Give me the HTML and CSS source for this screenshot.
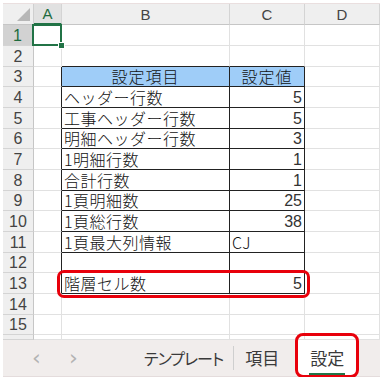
FILE: index.html
```html
<!DOCTYPE html>
<html lang="ja">
<head>
	<meta charset="UTF-8">
	<title>設定</title>
	<link rel="stylesheet" href="styles.css">
</head>
<body>
	<div class="app">
		<table class="sheet">
			<colgroup>
				<col class="c-row">
				<col class="c-a">
				<col class="c-b">
				<col class="c-c">
				<col class="c-d">
			</colgroup>
			<tr class="r-head">
				<td class="corner"><span class="corner-tri"></span></td>
				<td class="colh sel">A</td>
				<td class="colh">B</td>
				<td class="colh">C</td>
				<td class="colh">D</td>
			</tr>
			<tr class="r21">
				<td class="rowh sel">1</td>
				<td class="cur"><span class="cursor"><i></i></span></td>
				<td></td><td></td><td></td>
			</tr>
			<tr class="r21">
				<td class="rowh">2</td><td></td>
				<td class="tt"></td><td class="tt"></td><td></td>
			</tr>
			<tr class="r20">
				<td class="rowh">3</td><td class="tl"></td>
				<td class="t hd">設定項目</td><td class="t hd">設定値</td><td></td>
			</tr>
			<tr class="r21">
				<td class="rowh">4</td><td class="tl"></td>
				<td class="t">ヘッダー行数</td><td class="t num">5</td><td></td>
			</tr>
			<tr class="r21">
				<td class="rowh">5</td><td class="tl"></td>
				<td class="t">工事ヘッダー行数</td><td class="t num">5</td><td></td>
			</tr>
			<tr class="r20">
				<td class="rowh">6</td><td class="tl"></td>
				<td class="t">明細ヘッダー行数</td><td class="t num">3</td><td></td>
			</tr>
			<tr class="r21">
				<td class="rowh">7</td><td class="tl"></td>
				<td class="t">1明細行数</td><td class="t num">1</td><td></td>
			</tr>
			<tr class="r21">
				<td class="rowh">8</td><td class="tl"></td>
				<td class="t">合計行数</td><td class="t num">1</td><td></td>
			</tr>
			<tr class="r20">
				<td class="rowh">9</td><td class="tl"></td>
				<td class="t">1頁明細数</td><td class="t num">25</td><td></td>
			</tr>
			<tr class="r21">
				<td class="rowh">10</td><td class="tl"></td>
				<td class="t">1頁総行数</td><td class="t num">38</td><td></td>
			</tr>
			<tr class="r21">
				<td class="rowh">11</td><td class="tl"></td>
				<td class="t">1頁最大列情報</td><td class="t">CJ</td><td></td>
			</tr>
			<tr class="r20">
				<td class="rowh">12</td><td class="tl"></td>
				<td class="t"></td><td class="t"></td><td></td>
			</tr>
			<tr class="r21">
				<td class="rowh">13</td><td class="tl"></td>
				<td class="t mark">階層セル数<span class="ring"></span></td><td class="t num">5</td><td></td>
			</tr>
			<tr class="r21">
				<td class="rowh">14</td><td></td><td></td><td></td><td></td>
			</tr>
			<tr class="r20">
				<td class="rowh">15</td><td></td><td></td><td></td><td></td>
			</tr>
			<tr class="r-cut">
				<td class="rowh"></td><td></td><td></td><td></td><td></td>
			</tr>
		</table>

		<div class="tabbar">
			<span class="nav">&lsaquo;</span>
			<span class="nav">&rsaquo;</span>
			<span class="tab first">テンプレート</span>
			<span class="sep"></span>
			<span class="tab kanji">項目</span>
			<span class="tab active"><span class="label">設定</span><span class="ring-tab"></span></span>
		</div>
	</div>
</body>
</html>
```

FILE: styles.css
```css
*{
	padding:0;
	margin:0;
}
body{
	background-color:#fff;
	font-family:"Liberation Sans","Noto Sans CJK JP",sans-serif;
}
.app{
	width:377px;
	margin:3px 0 0 3px;
	border-top:1px solid #eadfdf;
}
.sheet{
	border-collapse:separate;
	border-spacing:0;
	table-layout:fixed;
	width:377px;
}
.c-row{ width:31px; }
.c-a{ width:28px; }
.c-b{ width:168px; }
.c-c{ width:75px; }
.c-d{ width:75px; }

.sheet td{
	box-sizing:border-box;
	padding:0 2px;
	border-right:1px solid #e1e1e1;
	border-bottom:1px solid #e1e1e1;
	font-size:15px;
	line-height:19px;
	color:#111;
	white-space:nowrap;
	vertical-align:bottom;
}
.r-head td{ height:21px; }
.r21 td{ height:21px; }
.r20 td{ height:20px; }
.r-cut td{ height:5px; line-height:4px; }

/* headers */
.sheet td.corner{
	position:relative;
	background-color:#efefef;
	border-right:1px solid #cfcfcf;
	border-bottom:1px solid #c6c6c6;
}
.corner-tri{
	position:absolute;
	right:3px;
	bottom:3px;
	width:0;
	height:0;
	border-left:13px solid transparent;
	border-bottom:13px solid #b7b7b7;
}
.sheet td.colh{
	background-color:#efefef;
	border-right:1px solid #d4d4d4;
	border-bottom:1px solid #c6c6c6;
	text-align:center;
	color:#444;
	vertical-align:middle;
}
.sheet td.colh.sel{
	background-color:#e1e1e1;
	color:#1e6b3e;
	border-bottom:2px solid #217346;
}
.sheet td.rowh{
	background-color:#efefef;
	border-right:1px solid #c6c6c6;
	border-bottom:1px solid #d4d4d4;
	text-align:center;
	color:#444;
	vertical-align:middle;
	font-size:16px;
}
.sheet td.rowh.sel{
	background-color:#d2d2d2;
	color:#1e6b3e;
	border-right:2px solid #217346;
}

/* active cell */
.sheet td.cur{
	position:relative;
}
.cursor{
	position:absolute;
	left:-2px;
	top:-1px;
	right:-1px;
	bottom:-1px;
	border:2px solid #217346;
}
.cursor i{
	position:absolute;
	right:-5px;
	bottom:-5px;
	width:5px;
	height:5px;
	background-color:#217346;
	border:1px solid #fff;
}

/* settings table */
.sheet td.tt{ border-bottom:1px solid #222; }
.sheet td.tl{ border-right:1px solid #222; }
.sheet td.t{
	border-right:1px solid #222;
	border-bottom:1px solid #222;
	font-family:"Noto Sans CJK JP","Liberation Sans",sans-serif;
	font-weight:300;
	font-size:16px;
	letter-spacing:0.5px;
}
.sheet td.hd{
	background-color:#9fcdf8;
	text-align:center;
	letter-spacing:1px;
}
.sheet td.num{
	text-align:right;
	font-family:"Liberation Sans",sans-serif;
	font-size:16px;
	letter-spacing:0;
	color:#333;
}

/* red highlight marks */
.sheet td.mark{
	position:relative;
}
.ring{
	position:absolute;
	left:-5px;
	top:-3px;
	width:253px;
	height:28px;
	border:3px solid #e8000b;
	border-radius:7px;
	box-sizing:border-box;
}

/* sheet tabs */
.tabbar{
	display:flex;
	align-items:center;
	height:36px;
	background-color:#f1edec;
	border-bottom:1px solid #e4dcdc;
	font-family:"Noto Sans CJK JP",sans-serif;
	font-feature-settings:"palt";
	font-size:16px;
	color:#3a3a3a;
}
.nav{
	width:37px;
	text-align:center;
	color:#b3b3b3;
	font-family:"DejaVu Sans",sans-serif;
	font-size:22px;
	line-height:30px;
}
.nav:first-child{ margin-left:15px; }
.tab{
	line-height:36px;
}
.tab.first{
	margin-left:52px;
	letter-spacing:-1px;
}
.sep{
	width:1px;
	height:24px;
	background-color:#cfcfcf;
	margin:0 11px 0 10px;
}
.tab.kanji{
	font-size:17px;
}
.tab.active{
	position:relative;
	margin-left:19px;
	width:58px;
	height:36px;
	background-color:#fff;
	border-radius:0 0 4px 4px;
	text-align:center;
	font-size:17px;
}
.tab.active .label{
	display:inline-block;
	line-height:30px;
	border-bottom:2px solid #217346;
	padding:0 1px;
}
.ring-tab{
	position:absolute;
	left:-3px;
	top:-7px;
	right:-3px;
	bottom:-2px;
	border:3px solid #e8000b;
	border-radius:8px;
}
```
